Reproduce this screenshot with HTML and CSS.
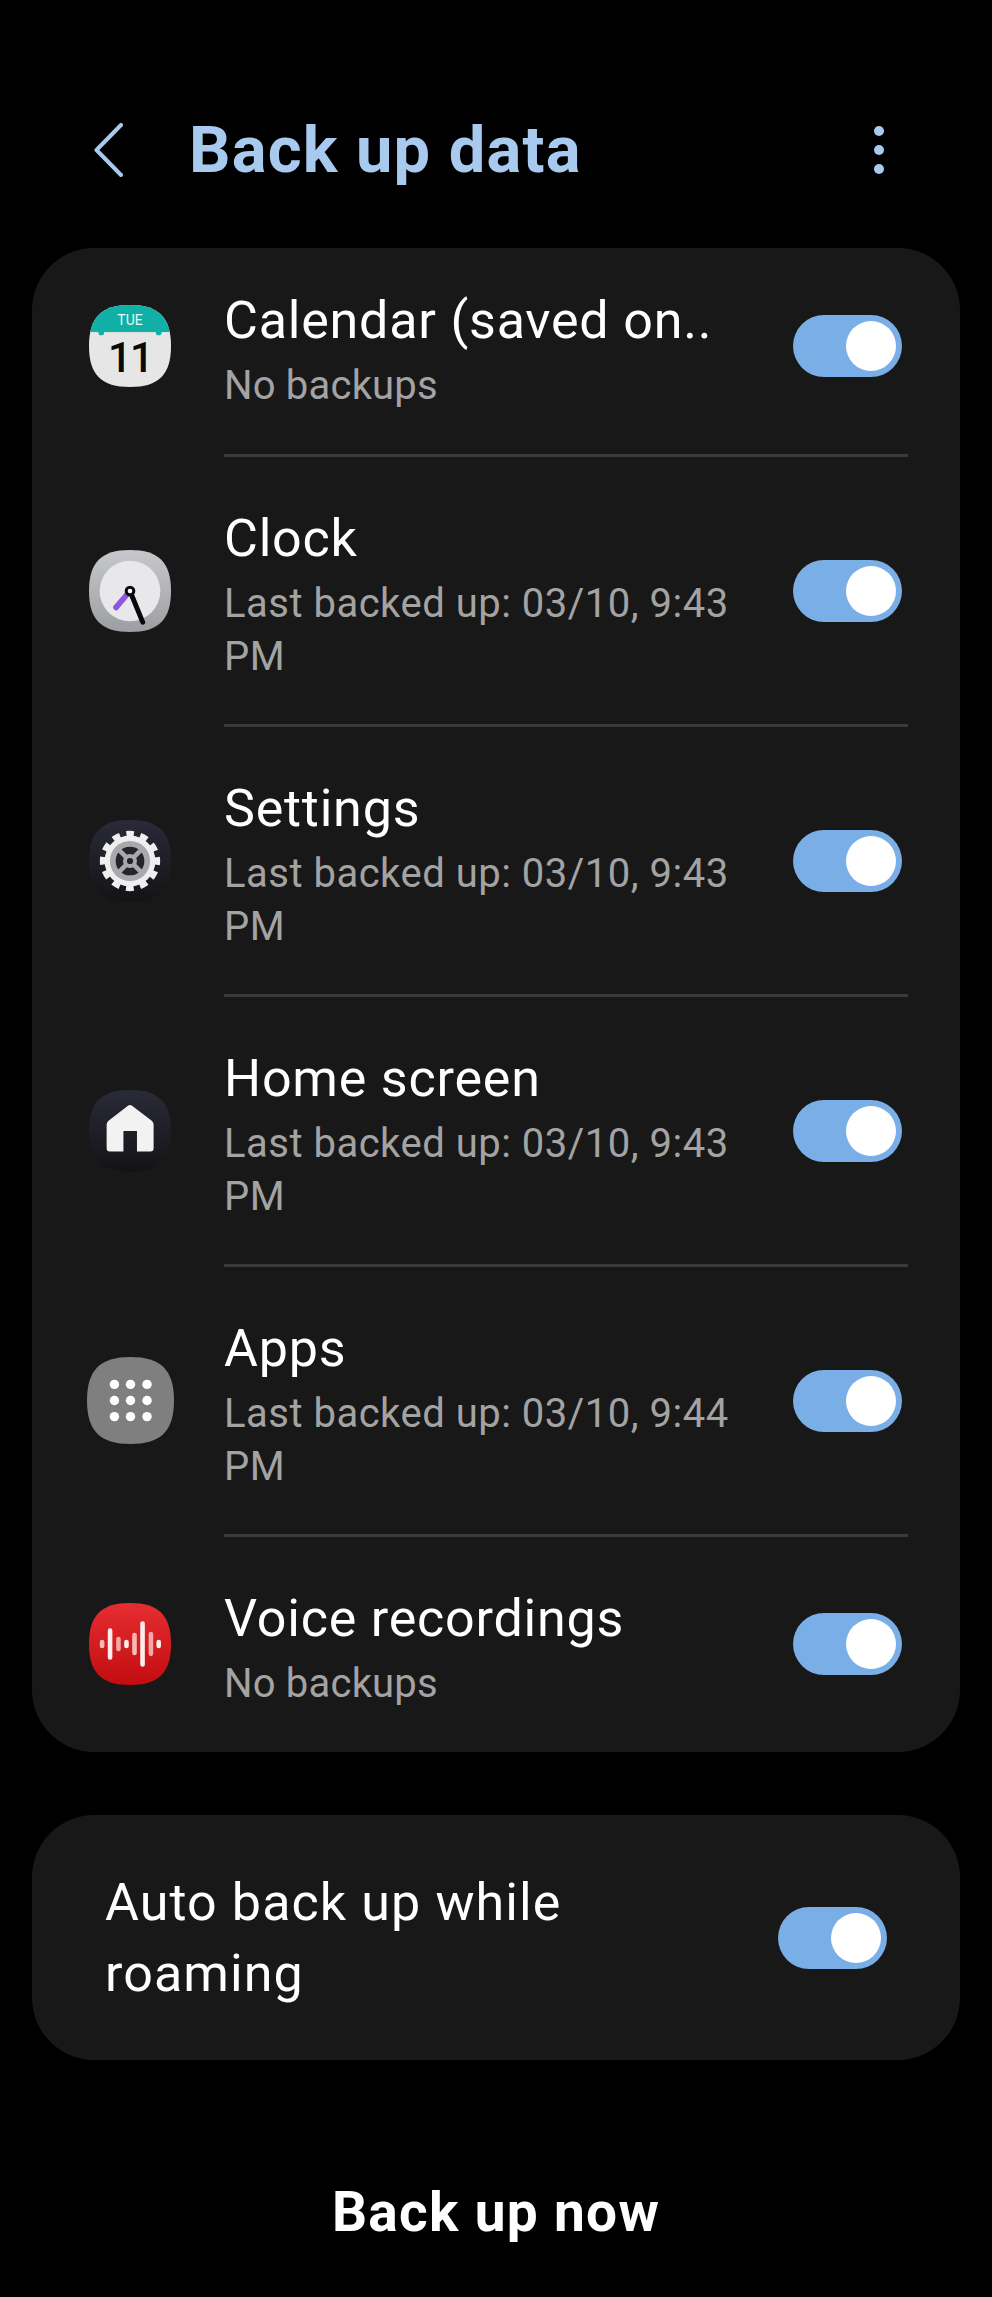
FILE: index.html
```html
<!DOCTYPE html>
<html lang="en">
<head>
<meta charset="utf-8">
<title>Back up data</title>
<link rel="stylesheet" href="styles.css">
</head>
<body>
<header class="header">
  <svg class="back" viewBox="0 0 29 54" aria-hidden="true"><path d="M27 2 2.5 27 27 52"/></svg>
  <h1 class="title">Back up data</h1>
  <div class="more"><i></i><i></i><i></i></div>
</header>
<section class="card">
  <div class="row row-first">
    <div class="slot"><svg class="icon" viewBox="0 0 100 100">
      <defs><clipPath id="sq"><path d="M50 0C85 0 100 15 100 50S85 100 50 100 0 85 0 50 15 0 50 0Z"/></clipPath></defs>
      <g clip-path="url(#sq)"><rect width="100" height="100" fill="#e6e6e6"/><rect width="100" height="33" fill="#10b0a6"/>
      <rect x="11.500" y="30" width="7" height="7" rx="3.500" fill="#10b0a6"/><rect x="81.500" y="30" width="7" height="7" rx="3.500" fill="#10b0a6"/></g>
      <text class="cal-day" x="50" y="24.500">TUE</text><text class="cal-num" x="50" y="81.500">11</text>
    </svg></div>
    <div class="text"><div class="name">Calendar (saved on..</div><div class="sub">No backups</div></div>
    <div class="toggle"><span></span></div>
  </div>
  <div class="divider"></div>
  <div class="row">
    <div class="slot"><svg class="icon" viewBox="0 0 100 100">
      <defs><linearGradient id="cg" x1="0" y1="0" x2="0" y2="1"><stop offset="0" stop-color="#c6c8cb"/><stop offset="1" stop-color="#9c9ea2"/></linearGradient></defs>
      <path fill="url(#cg)" d="M50 0C85 0 100 15 100 50S85 100 50 100 0 85 0 50 15 0 50 0Z"/>
      <circle cx="50" cy="50" r="37" fill="#e8e8ea"/>
      <path d="M50 50 33 70" stroke="#8f55e0" stroke-width="7" stroke-linecap="round" fill="none"/>
      <path d="M50 50 65.500 88" stroke="#08080a" stroke-width="6" stroke-linecap="round" fill="none"/>
      <circle cx="50" cy="50" r="6.500" fill="#08080a"/><circle cx="50" cy="50" r="2.800" fill="#fff"/>
    </svg></div>
    <div class="text"><div class="name">Clock</div><div class="sub sub-date">Last backed up: 03/10, 9:43 PM</div></div>
    <div class="toggle"><span></span></div>
  </div>
  <div class="divider"></div>
  <div class="row">
    <div class="slot"><svg class="icon" viewBox="0 0 100 100">
      <defs><linearGradient id="dg" x1="0" y1="0" x2="0" y2="1"><stop offset="0" stop-color="#2a2a39"/><stop offset="1" stop-color="#131316"/></linearGradient></defs>
      <path fill="url(#dg)" d="M50 0C85 0 100 15 100 50S85 100 50 100 0 85 0 50 15 0 50 0Z"/>
      <circle cx="50" cy="50" r="31" fill="#efefef"/>
      <circle cx="50" cy="50" r="33.500" fill="none" stroke="#efefef" stroke-width="6.500" stroke-dasharray="9.500 8.040" stroke-dashoffset="4.750" transform="rotate(-90 50 50)"/>
      <circle cx="50" cy="50" r="24.500" fill="#a9a9ad"/>
      <circle cx="50" cy="50" r="17.500" fill="#24242e"/>
      <path d="M37 37 63 63M63 37 37 63" stroke="#a9a9ad" stroke-width="5.500"/>
      <circle cx="50" cy="50" r="8.500" fill="#a9a9ad"/><circle cx="50" cy="50" r="3.800" fill="#24242e"/>
    </svg></div>
    <div class="text"><div class="name">Settings</div><div class="sub sub-date">Last backed up: 03/10, 9:43 PM</div></div>
    <div class="toggle"><span></span></div>
  </div>
  <div class="divider"></div>
  <div class="row">
    <div class="slot"><svg class="icon" viewBox="0 0 100 100">
      <path fill="url(#dg)" d="M50 0C85 0 100 15 100 50S85 100 50 100 0 85 0 50 15 0 50 0Z"/>
      <path fill="#f2f2f2" d="M47.500 19.300a4 4 0 0 1 5 0L76.500 37.500a6 6 0 0 1 2.300 4.500V71a4 4 0 0 1-4 4H58.500V50H42V75H25.500a4 4 0 0 1-4-4V42a6 6 0 0 1 2.300-4.500Z"/>
    </svg></div>
    <div class="text"><div class="name">Home screen</div><div class="sub sub-date">Last backed up: 03/10, 9:43 PM</div></div>
    <div class="toggle"><span></span></div>
  </div>
  <div class="divider"></div>
  <div class="row">
    <div class="slot"><svg class="icon icon-apps" viewBox="0 0 100 100">
      <path fill="#7f7f7f" d="M50 0C85 0 100 15 100 50S85 100 50 100 0 85 0 50 15 0 50 0Z"/>
      <g fill="#fff"><circle cx="31.500" cy="31.500" r="5.400"/><circle cx="50" cy="31.500" r="5.400"/><circle cx="69" cy="31.500" r="5.400"/><circle cx="31.500" cy="50" r="5.400"/><circle cx="50" cy="50" r="5.400"/><circle cx="69" cy="50" r="5.400"/><circle cx="31.500" cy="68.500" r="5.400"/><circle cx="50" cy="68.500" r="5.400"/><circle cx="69" cy="68.500" r="5.400"/></g>
    </svg></div>
    <div class="text"><div class="name">Apps</div><div class="sub sub-date">Last backed up: 03/10, 9:44 PM</div></div>
    <div class="toggle"><span></span></div>
  </div>
  <div class="divider"></div>
  <div class="row row-last">
    <div class="slot"><svg class="icon" viewBox="0 0 100 100">
      <defs><linearGradient id="rg" x1="0" y1="0" x2="0" y2="1"><stop offset="0" stop-color="#e62e32"/><stop offset="1" stop-color="#c20c10"/></linearGradient></defs>
      <path fill="url(#rg)" d="M50 0C85 0 100 15 100 50S85 100 50 100 0 85 0 50 15 0 50 0Z"/>
      <g stroke-width="5.600" stroke-linecap="round" fill="none">
        <path stroke="#f8b9b9" d="M16 47.500V52.500"/><path stroke="#fdeeee" d="M25.700 33.500V66.500"/><path stroke="#f7a6a6" d="M35.900 44V56"/><path stroke="#fdeeee" d="M45.700 47.500V52.500"/><path stroke="#f8b9b9" d="M55.500 39V61"/><path stroke="#fdeeee" d="M65.300 25V75"/><path stroke="#f7a6a6" d="M75.500 38V62"/><path stroke="#fdeeee" d="M85 47.500V52.500"/>
      </g>
    </svg></div>
    <div class="text"><div class="name">Voice recordings</div><div class="sub">No backups</div></div>
    <div class="toggle"><span></span></div>
  </div>
</section>
<section class="card card-roam">
  <div class="roam-text">Auto back up while roaming</div>
  <div class="toggle"><span></span></div>
</section>
<footer class="footer">Back up now</footer>
</body>
</html>
```
FILE: styles.css
```css
* { box-sizing: border-box; }
html, body { margin: 0; padding: 0; background: #000; }
body {
  width: 992px;
  height: 2297px;
  overflow: hidden;
  font-family: Roboto, "Noto Sans", "Liberation Sans", sans-serif;
  color: #fff;
}
.header {
  height: 248px;
  display: flex;
  align-items: center;
  padding: 52px 0 0 94px;
}
.back {
  width: 29px;
  height: 54px;
  flex: none;
  fill: none;
  stroke: #a8caef;
  stroke-width: 4;
  stroke-linecap: round;
  stroke-linejoin: round;
}
.title {
  margin: 0 0 0 66px;
  font-size: 65px;
  line-height: 70px;
  letter-spacing: 1.2px;
  font-weight: 700;
  color: #a8caef;
  flex: 1;
}
.more {
  display: flex;
  flex-direction: column;
  gap: 9px;
  margin: 0 108px 0 0;
}
.more i {
  display: block;
  width: 10px;
  height: 10px;
  border-radius: 50%;
  background: #a8caef;
}
.card {
  margin: 0 32px;
  background: #181818;
  border-radius: 62px;
  height: 1504px;
}
.row {
  display: flex;
  align-items: center;
  padding: 44px 58px 44px 57px;
}
.row-first { padding-top: 35px; padding-bottom: 45px; }
.slot {
  width: 82px;
  flex: none;
  display: flex;
  justify-content: center;
  margin-right: 53px;
}
.icon { width: 82px; height: 82px; flex: none; display: block; }
.icon-apps { width: 87px; height: 87px; }
.cal-day { font-size: 17px; font-weight: 400; fill: #e6fbf8; text-anchor: middle; }
.cal-num { font-size: 51px; font-weight: 500; letter-spacing: -2px; fill: #0a0a0a; text-anchor: middle; }
.text { flex: 1; padding-top: 3px; margin-bottom: -3px; min-width: 0; }
.name { font-size: 52px; line-height: 70px; margin-bottom: 3px; letter-spacing: 0.8px; color: #fff; }
.sub { font-size: 40px; line-height: 53px; letter-spacing: 0.2px; color: #a3a3a3; }
.sub-date { letter-spacing: 0.5px; }
.divider {
  height: 3px;
  margin: 0 52px 0 192px;
  background: #3a3a3a;
}
.toggle {
  width: 109px;
  height: 62px;
  flex: none;
  border-radius: 31px;
  background: #7aaee6;
  display: flex;
  align-items: center;
  justify-content: flex-end;
  padding-right: 6px;
}
.toggle span {
  display: block;
  width: 50px;
  height: 50px;
  border-radius: 50%;
  background: #fff;
}
.card-roam {
  margin-top: 63px;
  height: 245px;
  display: flex;
  align-items: center;
  padding: 0 73px;
}
.roam-text {
  flex: 1;
  font-size: 52px;
  line-height: 71px;
  letter-spacing: 1.1px;
  padding-right: 100px;
}
.footer {
  margin-top: 117px;
  text-align: center;
  font-size: 55px;
  line-height: 70px;
  letter-spacing: 1.3px;
  font-weight: 700;
}
```
